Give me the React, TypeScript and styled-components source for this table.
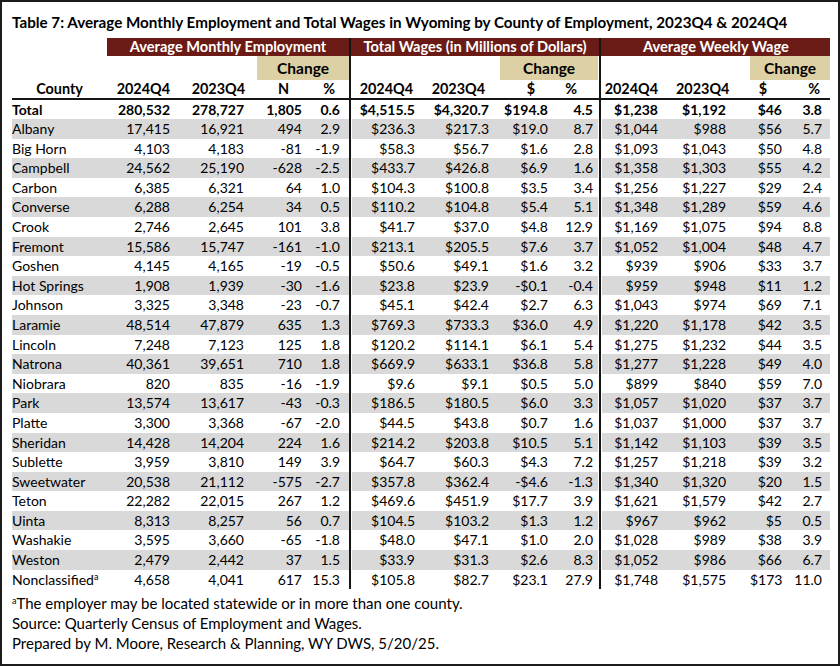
import React from "react";
import styled, { createGlobalStyle } from "styled-components";

const Global = createGlobalStyle`
  html, body { margin: 0; padding: 0; background: #fff; }
  body { font-family: Lato, "Liberation Sans", sans-serif; color: #000; }
`;

const COLS =
  "95px 75px 75px 52px 40px 3px 74px 74px 56px 42px 4px 74px 74px 42px 38px";

const MAROON = "#6b1b15";
const TAN = "#ddd0a5";
const GREY = "#d9d9d9";
const LINE = "#161616";

type Col = { pad: number; hpad: number };
const COL_SPEC: Col[] = [
  { pad: 12, hpad: 12 },
  { pad: 13, hpad: 12 },
  { pad: 7, hpad: 20 },
  { pad: 9, hpad: 14 },
  { pad: 11, hpad: 13 },
  { pad: 11, hpad: 15 },
  { pad: 8, hpad: 21 },
  { pad: 5, hpad: 21 },
  { pad: 18, hpad: 18 },
  { pad: 24, hpad: 23 },
  { pad: 10, hpad: 25 },
  { pad: 8, hpad: 10 },
];

const HEADS = [
  "2024Q4", "2023Q4", "N", "%",
  "2024Q4", "2023Q4", "$", "%",
  "2024Q4", "2023Q4", "$", "%",
];

const ROWS: string[][] = [
  ["Total","280,532","278,727","1,805","0.6","$4,515.5","$4,320.7","$194.8","4.5","$1,238","$1,192","$46","3.8"],
  ["Albany","17,415","16,921","494","2.9","$236.3","$217.3","$19.0","8.7","$1,044","$988","$56","5.7"],
  ["Big Horn","4,103","4,183","-81","-1.9","$58.3","$56.7","$1.6","2.8","$1,093","$1,043","$50","4.8"],
  ["Campbell","24,562","25,190","-628","-2.5","$433.7","$426.8","$6.9","1.6","$1,358","$1,303","$55","4.2"],
  ["Carbon","6,385","6,321","64","1.0","$104.3","$100.8","$3.5","3.4","$1,256","$1,227","$29","2.4"],
  ["Converse","6,288","6,254","34","0.5","$110.2","$104.8","$5.4","5.1","$1,348","$1,289","$59","4.6"],
  ["Crook","2,746","2,645","101","3.8","$41.7","$37.0","$4.8","12.9","$1,169","$1,075","$94","8.8"],
  ["Fremont","15,586","15,747","-161","-1.0","$213.1","$205.5","$7.6","3.7","$1,052","$1,004","$48","4.7"],
  ["Goshen","4,145","4,165","-19","-0.5","$50.6","$49.1","$1.6","3.2","$939","$906","$33","3.7"],
  ["Hot Springs","1,908","1,939","-30","-1.6","$23.8","$23.9","-$0.1","-0.4","$959","$948","$11","1.2"],
  ["Johnson","3,325","3,348","-23","-0.7","$45.1","$42.4","$2.7","6.3","$1,043","$974","$69","7.1"],
  ["Laramie","48,514","47,879","635","1.3","$769.3","$733.3","$36.0","4.9","$1,220","$1,178","$42","3.5"],
  ["Lincoln","7,248","7,123","125","1.8","$120.2","$114.1","$6.1","5.4","$1,275","$1,232","$44","3.5"],
  ["Natrona","40,361","39,651","710","1.8","$669.9","$633.1","$36.8","5.8","$1,277","$1,228","$49","4.0"],
  ["Niobrara","820","835","-16","-1.9","$9.6","$9.1","$0.5","5.0","$899","$840","$59","7.0"],
  ["Park","13,574","13,617","-43","-0.3","$186.5","$180.5","$6.0","3.3","$1,057","$1,020","$37","3.7"],
  ["Platte","3,300","3,368","-67","-2.0","$44.5","$43.8","$0.7","1.6","$1,037","$1,000","$37","3.7"],
  ["Sheridan","14,428","14,204","224","1.6","$214.2","$203.8","$10.5","5.1","$1,142","$1,103","$39","3.5"],
  ["Sublette","3,959","3,810","149","3.9","$64.7","$60.3","$4.3","7.2","$1,257","$1,218","$39","3.2"],
  ["Sweetwater","20,538","21,112","-575","-2.7","$357.8","$362.4","-$4.6","-1.3","$1,340","$1,320","$20","1.5"],
  ["Teton","22,282","22,015","267","1.2","$469.6","$451.9","$17.7","3.9","$1,621","$1,579","$42","2.7"],
  ["Uinta","8,313","8,257","56","0.7","$104.5","$103.2","$1.3","1.2","$967","$962","$5","0.5"],
  ["Washakie","3,595","3,660","-65","-1.8","$48.0","$47.1","$1.0","2.0","$1,028","$989","$38","3.9"],
  ["Weston","2,479","2,442","37","1.5","$33.9","$31.3","$2.6","8.3","$1,052","$986","$66","6.7"],
  ["Nonclassified","4,658","4,041","617","15.3","$105.8","$82.7","$23.1","27.9","$1,748","$1,575","$173","11.0"],
];

const Frame = styled.div`
  box-sizing: border-box;
  width: 840px;
  height: 666px;
  border: 2px solid #1c1c1c;
  padding: 10px 0 0 10px;
  overflow: hidden;
`;

const Title = styled.h1`
  margin: 0 0 6px 0;
  font-size: 15.2px;
  line-height: 20px;
  font-weight: 700;
  white-space: nowrap;
`;

const Table = styled.div`
  width: 818px;
  display: flex;
  flex-direction: column;
`;

const GridRow = styled.div<{ $h: number; $shade?: boolean; $bold?: boolean }>`
  display: grid;
  grid-template-columns: ${COLS};
  height: ${(p) => p.$h}px;
  background: ${(p) => (p.$shade ? GREY : "transparent")};
  font-size: 14px;
  font-weight: ${(p) => (p.$bold ? 700 : 400)};
  line-height: ${(p) => p.$h}px;
`;

const Sep = styled.div<{ $l: number; $r: number; $side?: string }>`
  box-sizing: border-box;
  background: ${LINE};
  border-left: ${(p) => p.$l}px solid ${(p) => p.$side ?? "#fff"};
  border-right: ${(p) => p.$r}px solid ${(p) => p.$side ?? "#fff"};
`;

const Band = styled.div<{ $span: string }>`
  grid-column: ${(p) => p.$span};
  background: ${MAROON};
  color: #fff;
  font-weight: 700;
  font-size: 14.6px;
  text-align: center;
  white-space: nowrap;
`;

const ChangeBox = styled.div<{ $span: string }>`
  grid-column: ${(p) => p.$span};
  background: ${TAN};
  font-weight: 700;
  font-size: 15.5px;
  text-align: center;
`;

const Blank = styled.div<{ $span: string }>`
  grid-column: ${(p) => p.$span};
`;

const HeadCell = styled.div<{ $hpad: number; $center?: boolean }>`
  text-align: ${(p) => (p.$center ? "center" : "right")};
  padding-right: ${(p) => (p.$center ? 0 : p.$hpad)}px;
  font-weight: 700;
  font-size: 14.4px;
  white-space: nowrap;
`;

const Rule = styled.div`
  height: 2px;
  background: ${LINE};
`;

const NameCell = styled.div`
  white-space: nowrap;
`;

const NumCell = styled.div<{ $pad: number }>`
  text-align: right;
  padding-right: ${(p) => p.$pad}px;
  white-space: nowrap;
`;

const Sup = styled.sup`
  font-size: 9px;
  line-height: 0;
  vertical-align: 5px;
`;

const Notes = styled.div`
  margin-top: 4px;
  font-size: 15px;
  line-height: 20px;
`;

const seps = (i: number, side?: string) =>
  i === 5 ? (
    <Sep key="s1" $l={0} $r={1} $side={side} />
  ) : (
    <Sep key="s2" $l={1} $r={1} $side={side} />
  );

function renderCells(cells: React.ReactNode[]) {
  const out: React.ReactNode[] = [];
  cells.forEach((c, i) => {
    out.push(c);
    if (i === 4) out.push(seps(5));
    if (i === 8) out.push(seps(10));
  });
  return out;
}

export default function App() {
  return (
    <Frame>
      <Global />
      <Title>
        Table 7: Average Monthly Employment and Total Wages in Wyoming by County
        of Employment, 2023Q4 &amp; 2024Q4
      </Title>
      <Table>
        <GridRow $h={18}>
          <Blank $span="1 / 2" />
          <Band $span="2 / 6">Average Monthly Employment</Band>
          <Sep $l={0} $r={1} $side={MAROON} />
          <Band $span="7 / 11">Total Wages (in Millions of Dollars)</Band>
          <Sep $l={1} $r={1} $side={MAROON} />
          <Band $span="12 / 16">Average Weekly Wage</Band>
        </GridRow>
        <GridRow $h={24}>
          <Blank $span="1 / 4" />
          <ChangeBox $span="4 / 6">Change</ChangeBox>
          <Sep $l={0} $r={1} />
          <Blank $span="7 / 9" />
          <ChangeBox $span="9 / 11">Change</ChangeBox>
          <Sep $l={1} $r={1} />
          <Blank $span="12 / 14" />
          <ChangeBox $span="14 / 16">Change</ChangeBox>
        </GridRow>
        <GridRow $h={18}>
          {renderCells([
            <HeadCell key="c" $hpad={0} $center>
              County
            </HeadCell>,
            ...HEADS.map((h, i) => (
              <HeadCell key={i} $hpad={COL_SPEC[i].hpad}>
                {h}
              </HeadCell>
            )),
          ])}
        </GridRow>
        <Rule />
        {ROWS.map((r, ri) => (
          <GridRow
            key={r[0]}
            $h={ri === 0 ? 19 : 19.6}
            $shade={ri % 2 === 1}
            $bold={ri === 0}
          >
            {renderCells([
              <NameCell key="n">
                {r[0]}
                {r[0] === "Nonclassified" && <Sup>a</Sup>}
              </NameCell>,
              ...r.slice(1).map((v, i) => (
                <NumCell key={i} $pad={COL_SPEC[i].pad}>
                  {v}
                </NumCell>
              )),
            ])}
          </GridRow>
        ))}
      </Table>
      <Notes>
        <div>
          <Sup>a</Sup>The employer may be located statewide or in more than one
          county.
        </div>
        <div>Source: Quarterly Census of Employment and Wages.</div>
        <div>Prepared by M. Moore, Research &amp; Planning, WY DWS, 5/20/25.</div>
      </Notes>
    </Frame>
  );
}
